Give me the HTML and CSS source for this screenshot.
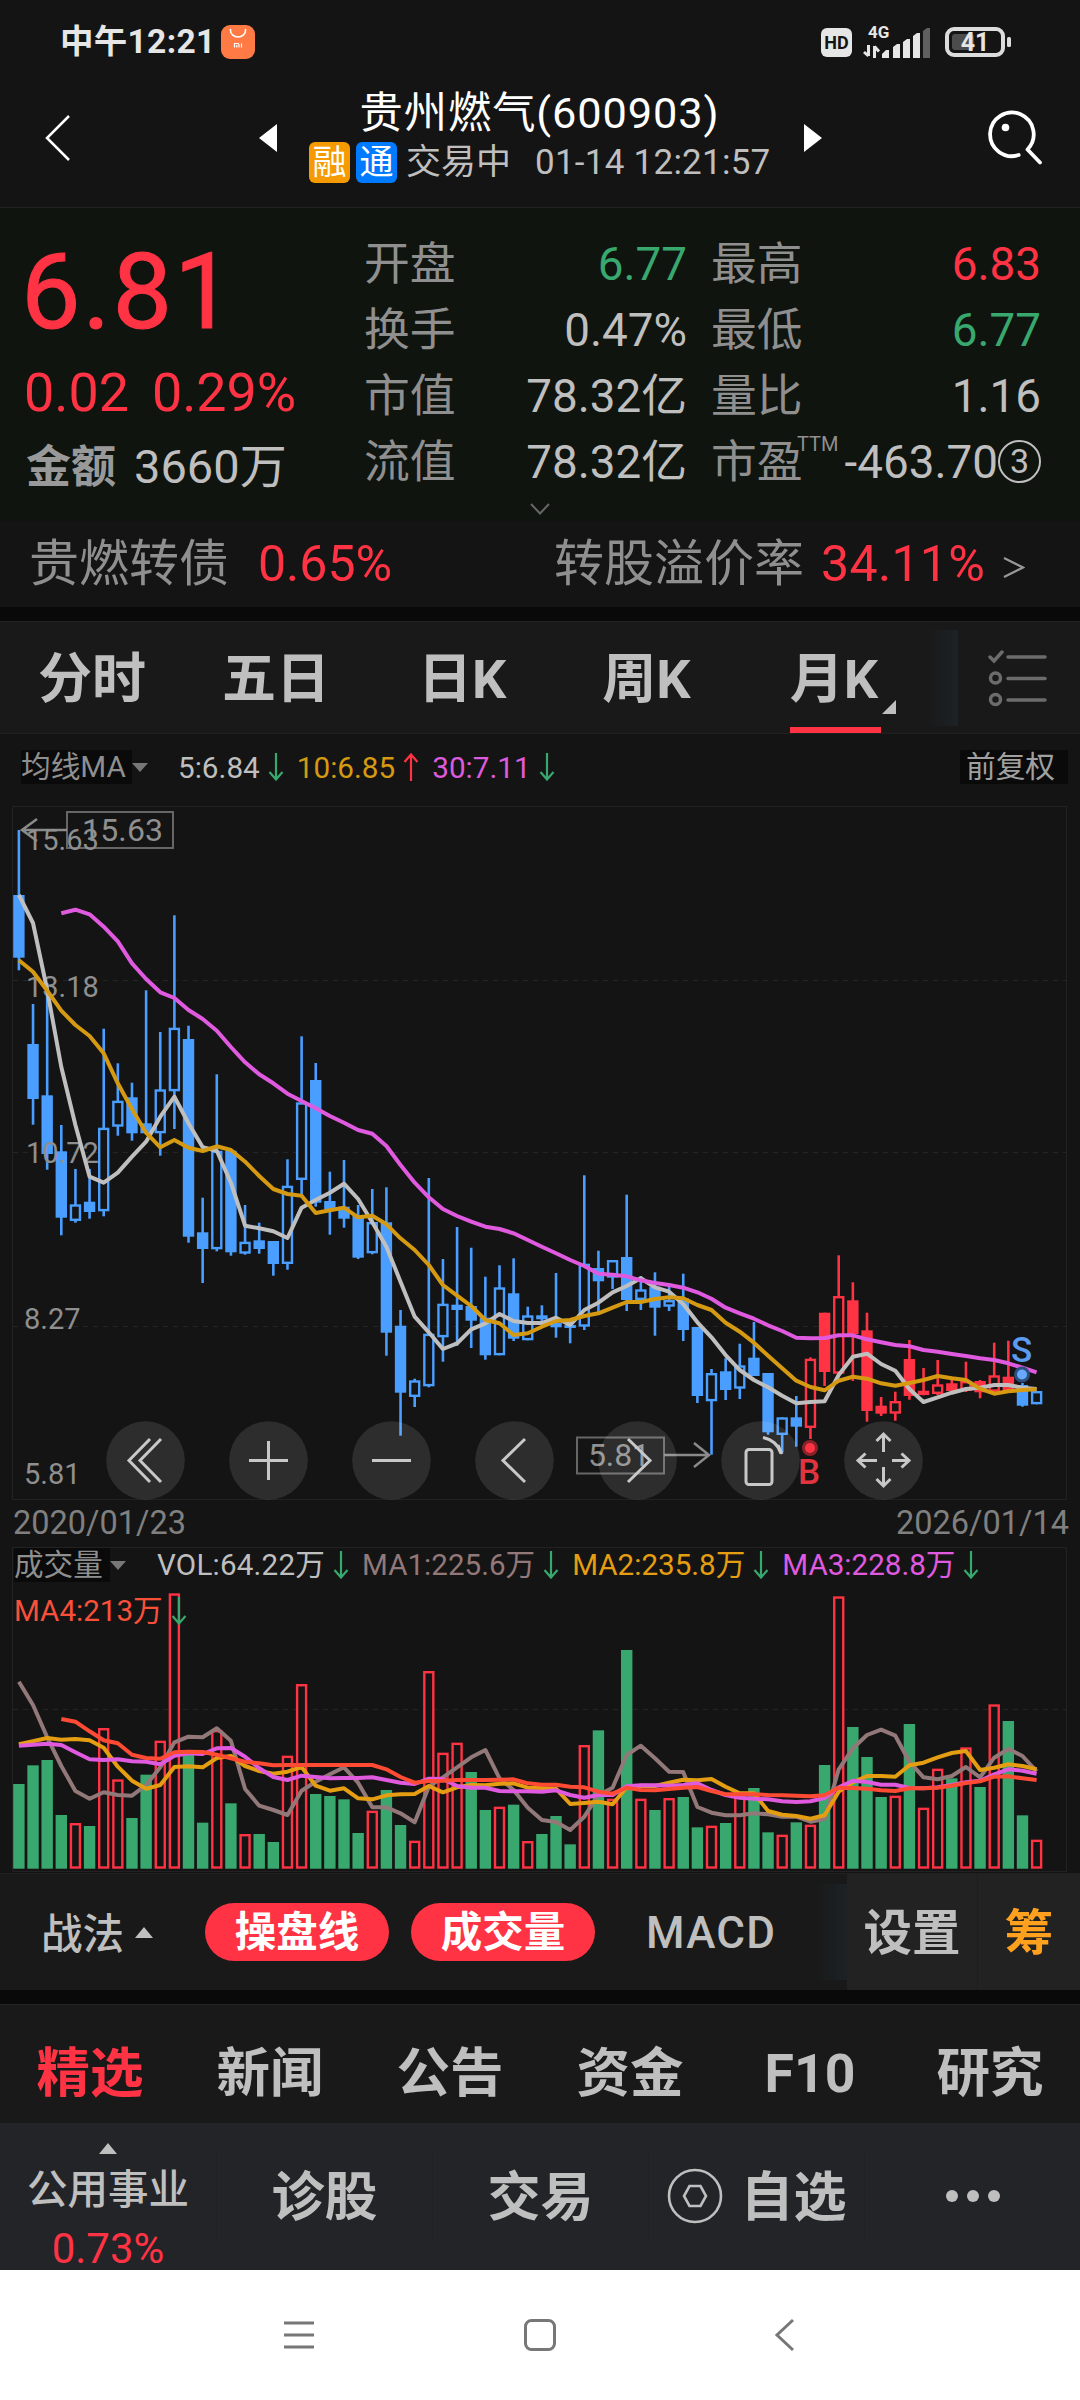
FILE: index.html
```html
<!DOCTYPE html>
<html lang="zh-CN">
<head>
    <meta charset="UTF-8">
    <meta name="viewport" content="width=device-width, initial-scale=1.0">
    <title>贵州燃气(600903)</title>
    <link rel="stylesheet" href="styles.css">
</head>
<body>

    <!-- 状态栏 -->
    <div class="status-bar">
        <span class="status-time">中午12:21</span>
        <svg class="mi-icon" width="34" height="34" viewBox="0 0 34 34">
            <rect width="34" height="34" rx="9" fill="#ff7a45"/>
            <path d="M9.500 4.500v1a7.500 6.500 0 0 0 15 0v-1" fill="none" stroke="#fff" stroke-width="1.600" stroke-linecap="round"/>
            <path d="M13.500 22.500v-4h3.200q1.300 0 1.300 1.500v2.500M15.800 20v2.500M20.500 18.500v4" fill="none" stroke="#fff" stroke-width="1.200"/>
        </svg>
        <span class="hd-badge">HD</span>
        <svg class="signal" width="70" height="36" viewBox="0 0 70 36">
            <text x="5" y="14" class="signal-text">4G</text>
            <path d="M5.500 21v11M1 28l4.500 4M11.500 34V22M11.500 22.500l4.500 5" fill="none" stroke="#e6e6e6" stroke-width="3"/>
            <g fill="#e6e6e6">
                <path d="M19 34v-4l4-4h3v8zM30 34V23l4-3h3v14zM40 34V18l4-3h3v19zM50 34V12l4-3h3v25z"/>
                <path d="M60 34V7l4-3h3v30z" fill="#606060"/>
            </g>
        </svg>
        <svg class="battery" width="68" height="32" viewBox="0 0 68 32">
            <rect x="3" y="3" width="56" height="26" rx="7" fill="none" stroke="#dcdcdc" stroke-width="4"/>
            <rect x="8" y="8" width="22" height="16" rx="3" fill="#4c4c4c"/>
            <rect x="63" y="11" width="4" height="10" rx="1.500" fill="#dcdcdc"/>
            <text x="31" y="24.500" class="battery-text">41</text>
        </svg>
    </div>

    <!-- 标题栏 -->
    <div class="header">
        <svg class="back" width="26" height="48" viewBox="0 0 26 48"><path d="M24 2L2 24l22 22" fill="none" stroke="#fff" stroke-width="2.500"/></svg>
        <svg class="prev" width="18" height="28" viewBox="0 0 18 28"><path d="M18 0v28L0 14z" fill="#fff"/></svg>
        <div class="title-box">
            <div class="title">贵州燃气(600903)</div>
            <div class="subtitle">
                <span class="badge badge-rong">融</span>
                <span class="badge badge-tong">通</span>
                <span class="state">交易中</span>
                <span class="time">01-14 12:21:57</span>
            </div>
        </div>
        <svg class="next" width="18" height="28" viewBox="0 0 18 28"><path d="M0 0l18 14L0 28z" fill="#fff"/></svg>
        <svg class="search" width="56" height="58" viewBox="0 0 56 58">
            <path d="M30.700 46A21.800 21.800 0 1 1 39.500 40.500L52 53.500" fill="none" stroke="#fff" stroke-width="3.800" stroke-linejoin="round" stroke-linecap="round"/>
            <circle cx="17.500" cy="18.500" r="3.800" fill="#fff"/>
        </svg>
    </div>

    <!-- 行情 -->
    <div class="quote">
        <div class="price-box">
            <div class="price">6.81</div>
            <div class="change"><span>0.02</span><span>0.29%</span></div>
            <div class="amount"><b>金额</b><span>3660万</span></div>
        </div>
        <div class="quote-grid">
            <span class="label">开盘</span><span class="value green">6.77</span>
            <span class="label">最高</span><span class="value red">6.83</span>
            <span class="label">换手</span><span class="value">0.47%</span>
            <span class="label">最低</span><span class="value green">6.77</span>
            <span class="label">市值</span><span class="value">78.32亿</span>
            <span class="label">量比</span><span class="value">1.16</span>
            <span class="label">流值</span><span class="value">78.32亿</span>
            <span class="label">市盈<sup class="ttm">TTM</sup></span><span class="value">-463.70<i class="circled">3</i></span>
        </div>
        <svg class="more" width="20" height="12" viewBox="0 0 20 12"><path d="M1 1l9 9.500L19 1" fill="none" stroke="#666" stroke-width="2"/></svg>
    </div>

    <!-- 转债 -->
    <div class="bond">
        <span>贵燃转债</span>
        <span class="red bond-rate">0.65%</span>
        <span class="bond-premium">转股溢价率</span>
        <span class="red bond-percent">34.11%</span>
        <svg width="22" height="24" viewBox="0 0 22 24"><path d="M1 2l19 9.500L1 21" fill="none" stroke="#999" stroke-width="2.200"/></svg>
    </div>

    <div class="gap"></div>

    <!-- 周期 -->
    <div class="period-tabs">
        <span>分时</span>
        <span>五日</span>
        <span>日K</span>
        <span>周K</span>
        <span class="active">月K</span>
        <div class="fade"></div>
        <svg class="list-icon" width="60" height="60" viewBox="0 0 60 60">
            <g fill="none" stroke="#6c6c6c" stroke-width="3.500" stroke-linecap="round">
                <path d="M2 9l4 4 8-9M20 9h37M20 30.500h37M20 52h37"/>
                <circle cx="7.500" cy="30" r="5"/>
                <circle cx="7.500" cy="51.500" r="5"/>
            </g>
        </svg>
    </div>

    <!-- 均线 -->
    <div class="ma-row">
        <span class="ma-label">均线MA</span>
        <i class="caret-down"></i>
        <span class="ma5">5:6.84</span><svg class="arrow down"><use href="#arrow"/></svg>
        <span class="ma10">10:6.85</span><svg class="arrow up"><use href="#arrow"/></svg>
        <span class="ma30">30:7.11</span><svg class="arrow down"><use href="#arrow"/></svg>
        <span class="fuquan">前复权</span>
    </div>

    <!-- K线图 -->
    <svg class="kline" width="1080" height="700" viewBox="0 800 1080 700">
        <defs>
            <symbol id="arrow" viewBox="0 0 16 28"><path d="M8 0v26M1.500 19L8 26.500l6.500-7.500" fill="none" stroke="currentColor" stroke-width="2.200"/></symbol>
        </defs>
        <path class="frame" d="M12.500 1499.500V806.500H1066.500V1499.500z"/>
        <path class="grid-line" d="M13 980.500H1066M13 1152.500H1066M13 1326.500H1066"/>
        <g id="candles"></g>
        <g class="tags">
            <rect x="67" y="812" width="106" height="36"/>
            <rect x="577" y="1437.500" width="87" height="36"/>
            <path d="M67 830H22M37 819L22 830l15 11M664 1455H709M694 1443l15 12-15 12"/>
            <text x="82" y="841" textLength="81">15.63</text>
            <text x="588" y="1466" textLength="62">5.81</text>
        </g>
        <g class="axis">
            <text x="26" y="850">15.63</text>
            <text x="26" y="997">13.18</text>
            <text x="26" y="1163">10.72</text>
            <text x="24" y="1329">8.27</text>
            <text x="24" y="1484">5.81</text>
        </g>
        <g id="price-lines"></g>
        <g class="marks">
            <circle cx="810" cy="1448" r="8" fill="#8c2229"/>
            <circle cx="810" cy="1448" r="5" fill="#ff3344"/>
            <text x="798" y="1484" fill="#e0343f">B</text>
            <circle cx="1022" cy="1374.500" r="8" fill="#2c4f7d"/>
            <circle cx="1022" cy="1374.500" r="5" fill="#6aa8ff"/>
            <text x="1011" y="1362" fill="#5c9cf0">S</text>
        </g>
        <g class="controls">
            <circle cx="145.500" cy="1460.500" r="39.300"/>
            <circle cx="268.500" cy="1460.500" r="39.300"/>
            <circle cx="391.500" cy="1460.500" r="39.300"/>
            <circle cx="514.500" cy="1460.500" r="39.300"/>
            <circle cx="637.500" cy="1460.500" r="39.300"/>
            <circle cx="760.500" cy="1460.500" r="39.300"/>
            <circle cx="883.500" cy="1460.500" r="39.300"/>
            <path d="M150 1439l-21 21.500 21 21.500M161 1439l-21 21.500 21 21.500"/>
            <path d="M249 1460.500h39M268.500 1441v39M372 1460.500h39"/>
            <path d="M525 1439l-22 21.500 22 21.500M628 1439l22 21.500-22 21.500"/>
            <rect x="746" y="1449.500" width="26" height="35" rx="3"/>
            <path d="M763 1437.500q14 3 18 16M778 1445l4 9"/>
            <path d="M883.500 1452v-17M876.500 1441l7-7 7 7M883.500 1467v18M876.500 1479l7 7 7-7M877 1460.500h-19M865.500 1453.500l-7.500 7 7.500 7M892 1460.500h17M901.500 1453.500l7.500 7-7.500 7"/>
        </g>
    </svg>
    <div class="dates"><span>2020/01/23</span><span>2026/01/14</span></div>

    <!-- 成交量 -->
    <div class="volume">
        <svg width="1080" height="326" viewBox="0 1547 1080 326">
            <path class="frame" d="M12.500 1547.500H1066.500V1871.500H12.500z"/>
            <path class="grid-line" d="M13 1709.500H1066"/>
            <g id="volume-bars"></g>
            <g id="volume-lines"></g>
        </svg>
        <div class="volume-legend">
            <span class="ma-label">成交量</span>
            <i class="caret-down"></i>
            <span class="vol">VOL:64.22万</span><svg class="arrow down"><use href="#arrow"/></svg>
            <span class="vma1">MA1:225.6万</span><svg class="arrow down"><use href="#arrow"/></svg>
            <span class="vma2">MA2:235.8万</span><svg class="arrow down"><use href="#arrow"/></svg>
            <span class="vma3">MA3:228.8万</span><svg class="arrow down"><use href="#arrow"/></svg>
            <span class="vma4">MA4:213万</span><svg class="arrow down"><use href="#arrow"/></svg>
        </div>
    </div>

    <!-- 指标 -->
    <div class="toolbar">
        <span class="zhanfa">战法</span>
        <i class="caret-up"></i>
        <span class="pill">操盘线</span>
        <span class="pill">成交量</span>
        <span class="macd">MACD</span>
        <div class="fade"></div>
        <span class="setting">设置</span>
        <span class="chip">筹</span>
    </div>

    <div class="gap"></div>

    <div class="news-tabs">
        <span class="active">精选</span>
        <span>新闻</span>
        <span>公告</span>
        <span>资金</span>
        <span>F10</span>
        <span>研究</span>
    </div>

    <!-- 底部操作栏 -->
    <div class="bottom-bar">
        <div class="industry">
            <i class="caret-up"></i>
            <span>公用事业</span>
            <span class="red industry-rate">0.73%</span>
        </div>
        <div class="action"><span>诊股</span></div>
        <div class="action"><span>交易</span></div>
        <div class="action">
            <svg width="56" height="56" viewBox="0 0 56 56" fill="none" stroke="#bfbfbf">
                <circle cx="28" cy="28" r="26" stroke-width="2.600"/>
                <path d="M22.500 18h11l5.500 10-5.500 10h-11L17 28z" stroke-width="2.600"/>
            </svg>
            <span>自选</span>
        </div>
        <div class="action">
            <svg width="56" height="14" viewBox="0 0 56 14" fill="#bfbfbf"><circle cx="7" cy="7" r="6"/><circle cx="28" cy="7" r="6"/><circle cx="49" cy="7" r="6"/></svg>
        </div>
    </div>

    <!-- 系统导航 -->
    <div class="nav">
        <svg width="32" height="32" viewBox="0 0 32 32"><path d="M1 4h30M1 16h30M1 28h30"/></svg>
        <svg width="34" height="34" viewBox="0 0 34 34"><rect x="1.500" y="2.500" width="29" height="29" rx="6"/></svg>
        <svg width="32" height="34" viewBox="0 0 32 34"><path d="M26 2L10 17l16 15"/></svg>
    </div>

    <script src="chart.js"></script>
</body>
</html>
```
FILE: styles.css
```css
/* 通用 */
* {
    box-sizing: border-box;
}
body {
    margin: 0;
    width: 1080px;
    height: 2400px;
    overflow: hidden;
    background: #141414;
    color: #bfbfbf;
    font-family: Roboto, 'Noto Sans CJK SC', sans-serif;
    display: flex;
    flex-direction: column;
}
svg {
    display: block;
    flex: none;
}
span {
    white-space: nowrap;
}
.red { color: #ff3344; }
.green { color: #38a86e; }
.gap {
    height: 14px;
    background: #090909;
}

/* 状态栏 */
.status-bar {
    height: 84px;
    display: flex;
    align-items: center;
    padding: 0 68px 0 60px;
    color: #e6e6e6;
}
.status-time {
    font-size: 33.500px;
    font-weight: 700;
    letter-spacing: .3px;
    line-height: 40px;
    width: 162px;
}
.hd-badge {
    margin-left: 566px;
    width: 31px;
    height: 29px;
    border-radius: 6px;
    background: #e6e6e6;
    color: #141414;
    font-size: 18px;
    font-weight: 700;
    line-height: 30px;
    text-align: center;
}
.signal {
    margin-left: 11px;
    overflow: visible;
}
.signal-text {
    font-size: 17px;
    font-weight: 700;
    fill: #e6e6e6;
}
.battery { margin-left: 11px; }
.battery-text {
    font-size: 25px;
    font-weight: 700;
    fill: #e6e6e6;
    text-anchor: middle;
}

/* 标题栏 */
.header {
    height: 124px;
    display: flex;
    align-items: center;
    border-bottom: 1px solid #1f2323;
    padding-bottom: 16px;
}
.back { margin-left: 45px; }
.prev { margin-left: 188px; }
.title-box {
    width: 527px;
    margin-top: -4px;
    text-align: center;
}
.title {
    color: #fff;
    font-size: 43.300px;
    line-height: 54px;
    letter-spacing: .9px;
    margin-left: -2px;
}
.subtitle {
    display: flex;
    align-items: center;
    padding-left: 32px;
    height: 43px;
    font-size: 35px;
    line-height: 43px;
}
.badge {
    width: 41px;
    height: 41px;
    border-radius: 6px;
    margin-right: 6px;
    color: #fff;
    font-size: 34px;
    line-height: 41px;
}
.badge-rong { background: #f59a00; }
.badge-tong { background: #007aff; }
.state { margin-left: 3px; }
.time {
    margin-left: 24px;
    letter-spacing: .25px;
}
.search { margin-left: 166px; }

/* 行情 */
.quote {
    height: 313px;
    background: #0f140f;
    display: flex;
    position: relative;
}
.price-box {
    width: 364px;
    padding-left: 24px;
}
.price {
    color: #ff3344;
    font-size: 106px;
    -webkit-text-stroke: 1px #ff3344;
    line-height: 110px;
    padding-top: 29px;
    height: 151px;
    margin-left: -3px;
    letter-spacing: 2px;
}
.change {
    display: flex;
    gap: 23px;
    color: #ff3344;
    font-size: 53.800px;
    line-height: 68px;
}
.amount {
    display: flex;
    gap: 18px;
    padding-left: 2px;
    font-size: 47px;
    line-height: 80px;
}
.amount b {
    font-size: 45px;
    line-height: 82px;
    color: #999;
}
.quote-grid {
    display: grid;
    grid-template-columns: 91px 232px 116px 238px;
    grid-auto-rows: 66px;
    padding-top: 24px;
    font-size: 45.800px;
    line-height: 66px;
}
.quote-grid .label { color: #8f8f8f; }
.quote-grid .label:nth-child(4n+3) { padding-left: 24px; }
.quote-grid .value { text-align: right; }
.ttm {
    position: absolute;
    left: 797px;
    top: 222px;
    font-size: 20px;
    line-height: 28px;
}
.circled {
    display: inline-block;
    width: 43px;
    height: 43px;
    border: 2px solid #bfbfbf;
    border-radius: 50%;
    font-size: 34px;
    font-style: normal;
    line-height: 38px;
    text-align: center;
    vertical-align: 5px;
}
.more {
    position: absolute;
    left: 530px;
    top: 295px;
}

/* 转债 */
.bond {
    height: 86px;
    display: flex;
    align-items: center;
    padding-left: 29px;
    font-size: 50px;
    line-height: 86px;
    color: #8f8f8f;
}
.bond span { height: 86px; }
.bond-rate { margin-left: 29px; }
.bond-premium { margin-left: 162px; }
.bond-percent {
    margin-left: 17px;
    letter-spacing: .3px;
}
.bond svg { margin: 7px 0 0 18px; }

/* 周期 */
.period-tabs {
    height: 113px;
    display: flex;
    align-items: center;
    background: #191919;
    border-top: 1px solid #222;
    border-bottom: 1px solid #202020;
    padding-left: 38px;
    font-size: 54px;
    font-weight: 700;
}
.period-tabs span {
    line-height: 116px;
    height: 111px;
    margin-right: 76px;
}
.period-tabs span:nth-child(2) { margin-right: 88px; }
.period-tabs span:nth-child(3) { margin-right: 96px; }
.period-tabs span:nth-child(4) { margin-right: 99px; }
.period-tabs .active {
    position: relative;
    width: 91px;
    margin-right: 46px;
    border-bottom: 6px solid #ff3344;
}
.period-tabs .active::after {
    content: '';
    position: absolute;
    right: -15px;
    top: 78px;
    border-left: 14px solid transparent;
    border-bottom: 14px solid #bfbfbf;
}
.fade {
    width: 30px;
    height: 96px;
    background: linear-gradient(to right, rgba(28, 34, 38, 0), #1c2226);
}
.period-tabs .fade { margin-left: auto; }
.list-icon { margin: 0 32px 0 30px; }

/* 均线 */
.ma-row {
    height: 66px;
    display: flex;
    align-items: center;
    padding: 0 12px 0 21px;
    font-size: 29.700px;
}
.ma-label {
    background: #0a0a0a;
    color: #8f8f8f;
    line-height: 34px;
}
.ma-row .ma-label { width: 111px; }
.caret-down {
    border: 8.500px solid transparent;
    border-top: 9px solid #777;
    border-bottom: 0;
}
.caret-up {
    border: 9.500px solid transparent;
    border-bottom: 11px solid #bfbfbf;
    border-top: 0;
}
.arrow {
    width: 16px;
    height: 28px;
}
.down { color: #38a86e; }
.up {
    color: #ff3344;
    transform: rotate(180deg);
}
.ma-row .arrow { margin: 0 13px 0 8px; }
.ma5 { margin-left: 30px; }
.ma10 { color: #d59a12; }
.ma30 { color: #dd5add; }
.fuquan {
    margin-left: auto;
    width: 108px;
    padding-left: 6px;
    background: #0a0a0a;
    line-height: 34px;
    color: #a0a0a0;
}

/* 图表 */
.frame {
    fill: none;
    stroke: #222;
}
.grid-line {
    stroke: #242424;
    stroke-dasharray: 5 5;
}
.axis {
    font-size: 29px;
    fill: #8f8f8f;
}
.tags {
    fill: none;
    stroke: #8a8a8a;
    stroke-width: 2.500;
}
.tags rect {
    stroke: #666;
    stroke-width: 2;
}
.tags text {
    font-size: 32px;
    fill: #8f8f8f;
    stroke: none;
}
.marks {
    font-size: 35px;
    font-weight: 500;
}
.controls {
    fill: none;
    stroke: #c8c8c8;
    stroke-width: 3;
}
.controls circle {
    fill: #fff;
    fill-opacity: .11;
    stroke: none;
}
.line {
    fill: none;
    stroke-width: 4;
    stroke-linejoin: round;
}
.dates {
    height: 47px;
    display: flex;
    justify-content: space-between;
    padding: 0 11px 0 13px;
    font-size: 32.500px;
    line-height: 47px;
    color: #808080;
}

/* 成交量 */
.volume {
    height: 326px;
    position: relative;
}
.volume-legend {
    position: absolute;
    left: 14px;
    top: 1px;
    width: 1050px;
    display: flex;
    flex-wrap: wrap;
    align-items: center;
    font-size: 29.600px;
    line-height: 34px;
    row-gap: 12px;
}
.volume-legend .ma-label { width: 96px; }
.volume-legend .arrow { margin: 0 13px 0 8px; }
.vol {
    margin-left: 31px;
    letter-spacing: .2px;
}
.vma1 { color: #927878; }
.vma2 { color: #e59e12; }
.vma3 { color: #e05ae0; }
.vma4 { color: #f9503a; }

/* 指标 */
.toolbar {
    height: 117px;
    display: flex;
    align-items: center;
    background: #191919;
    border-top: 1px solid #202020;
    padding-left: 41px;
    font-size: 41.500px;
    font-weight: 500;
}
.zhanfa { margin-top: -2px; }
.toolbar .caret-up { margin: 0 52px 0 11px; }
.pill {
    width: 184px;
    height: 58px;
    border-radius: 29px;
    margin-right: 22px;
    background: #ff3344;
    color: #fff;
    font-weight: 700;
    line-height: 60px;
    text-align: center;
}
.macd {
    margin: 2px 0 0 29px;
    font-size: 44px;
    letter-spacing: 1.300px;
}
.toolbar .fade { margin-left: auto; }
.setting, .chip {
    align-self: stretch;
    background: #222;
    line-height: 120px;
    text-align: center;
    font-size: 48.500px;
    font-weight: 700;
}
.setting {
    width: 131px;
    border-right: 1px solid #1d1d1d;
}
.chip {
    width: 102px;
    color: #ffa01e;
}

.news-tabs {
    height: 119px;
    display: grid;
    grid-template-columns: repeat(6, 180px);
    background: #191919;
    border-top: 1px solid #242424;
    font-size: 53.500px;
    font-weight: 700;
    line-height: 137px;
    text-align: center;
}
.news-tabs .active { color: #ff3344; }

/* 底部操作栏 */
.bottom-bar {
    height: 147px;
    display: grid;
    grid-template-columns: repeat(5, 216px);
    background: #232428;
}
.industry {
    display: flex;
    flex-direction: column;
    align-items: center;
    padding-top: 20px;
    font-size: 40.500px;
    font-weight: 500;
}
.industry span { line-height: 60px; }
.industry .caret-up { margin-bottom: 6px; }
.industry .industry-rate {
    font-size: 42px;
    font-weight: 400;
    line-height: 57px;
}
.action {
    display: flex;
    align-items: center;
    justify-content: center;
    gap: 18px;
    height: 88px;
    margin-top: 29px;
    border-left: 1px solid #1f2023;
    font-size: 53px;
    font-weight: 700;
    line-height: 84px;
}
.action span { margin-top: 4px; }

/* 系统导航 */
.nav {
    height: 130px;
    display: flex;
    justify-content: space-between;
    align-items: center;
    background: #fff;
    padding: 0 281px 0 283px;
}
.nav svg {
    fill: none;
    stroke: #777;
    stroke-width: 3;
}
```
FILE: chart.js
```javascript
const STEP = 14.135;
const LEFT = 18.9;
const BLUE = "#4a9eff";
const RED = "#ff3344";
const GREEN = "#38a86e";

// [最高, 实体上沿, 实体下沿, 最低, 是否空心]
const candles = [
    [830, 895, 957.7, 970.3, 0], [1004, 1044, 1099, 1124.7, 0], [983, 1095.3, 1154, 1169.7, 0], [1125, 1151.3, 1217.7, 1235.3, 0],
    [1169, 1204.3, 1221, 1222.7, 1], [1169, 1201.7, 1212, 1218.7, 0], [1028.7, 1127.7, 1211.3, 1216.3, 1], [1063.3, 1100.7, 1126.7, 1135.7, 1],
    [1082.7, 1097.3, 1133.3, 1140.7, 0], [990.3, 1123.3, 1133.3, 1134.3, 0], [1032, 1089.3, 1133.3, 1155.7, 1], [915.3, 1027.7, 1091.3, 1129, 1],
    [1025.7, 1039, 1236.7, 1242.7, 0], [1197.7, 1232.3, 1249, 1283, 0], [1074.3, 1150.7, 1249.3, 1251.3, 1], [1149.3, 1150.7, 1252.3, 1255.7, 0],
    [1205, 1241.7, 1253.7, 1254.7, 1], [1222.7, 1240.3, 1249, 1253.7, 0], [1241, 1241, 1264, 1275.7, 0], [1159.3, 1185.7, 1264, 1269.7, 1],
    [1036.3, 1102.3, 1180, 1195, 1], [1063, 1080, 1202.7, 1206.7, 0], [1171.7, 1201, 1209.3, 1234.7, 0], [1160, 1206.7, 1218.7, 1227.7, 0],
    [1205, 1215.5, 1257.7, 1259, 0], [1189, 1222, 1253.3, 1254.3, 1], [1187.3, 1222.3, 1332.7, 1355.7, 0], [1310, 1325.7, 1392.7, 1435.7, 0],
    [1378.7, 1380.3, 1397, 1407, 1], [1178, 1333.7, 1386.3, 1387.3, 1], [1259, 1303.7, 1337.3, 1361.7, 1], [1227, 1304.7, 1310, 1345.7, 0],
    [1247.7, 1306, 1320.7, 1348, 0], [1276.7, 1317.7, 1355.3, 1359.7, 0], [1265.3, 1287.3, 1355.3, 1355.3, 1], [1258.3, 1293.3, 1338.7, 1341, 0],
    [1306.7, 1315.3, 1340.3, 1340.3, 1], [1305.3, 1315.3, 1319.3, 1323, 0], [1273, 1323, 1327.3, 1337.7, 0], [1320, 1325, 1328, 1343.3, 0],
    [1175.3, 1263.7, 1326.7, 1330, 1], [1250.7, 1268, 1281.3, 1313.3, 0], [1260, 1260, 1277.7, 1289, 1], [1194.7, 1257, 1300, 1311, 0],
    [1276, 1289.3, 1300, 1310, 1], [1272.3, 1286.7, 1307.7, 1335.7, 0], [1283.3, 1300, 1306.7, 1311, 1], [1273.7, 1298.3, 1330, 1341, 0],
    [1327, 1327, 1396, 1403, 0], [1369, 1373, 1401.3, 1454.7, 1], [1358.3, 1371.3, 1390, 1400, 0], [1343.7, 1365.3, 1388.7, 1399, 1],
    [1322, 1357.7, 1376, 1376, 0], [1373, 1373, 1432.3, 1434.7, 0], [1417.3, 1417.3, 1435, 1452.3, 1], [1396, 1417.3, 1426.7, 1446.7, 0],
    [1357.3, 1358.7, 1428, 1439, 1], [1312.7, 1312.7, 1372, 1386, 0], [1255.3, 1296, 1373.7, 1374.7, 1], [1282.3, 1300.3, 1334, 1381, 0],
    [1312.7, 1330.3, 1411, 1421.7, 0], [1397, 1405.7, 1413.7, 1416, 0], [1391.7, 1401, 1413.7, 1420.7, 1], [1340, 1359, 1396, 1399.7, 0],
    [1368, 1390.7, 1395, 1395.3, 0], [1360, 1384.3, 1394, 1395, 1], [1376.7, 1383.3, 1391, 1391.7, 0], [1361.7, 1381, 1391, 1392, 1],
    [1380, 1381, 1392.3, 1398.3, 0], [1342.7, 1375.3, 1391.7, 1392, 1], [1340.7, 1376.7, 1391.7, 1392, 0], [1383, 1385, 1405.7, 1406.7, 0],
    [1391, 1391, 1404.3, 1404.3, 1]
];

const ma5 = [895, 923, 990, 1067, 1125, 1176.7, 1182.7, 1172.7, 1156.7, 1141.7, 1116.7, 1096.7, 1123.3, 1147.3, 1150.7, 1182.7, 1225.7, 1228.3, 1231.3, 1238, 1207.7, 1200, 1192.7, 1183.7, 1199, 1222.3, 1246.7, 1281.7, 1316.7, 1332.3, 1349, 1343.3, 1329.3, 1323.3, 1314, 1321, 1323, 1323, 1317.7, 1325, 1310, 1302.7, 1292.3, 1286, 1278.3, 1287.3, 1291.7, 1304, 1322.3, 1337.3, 1355, 1370, 1380, 1387.3, 1395.7, 1403.3, 1402, 1401.3, 1375, 1356.7, 1353.7, 1364, 1370.7, 1389, 1402, 1397.3, 1392.7, 1389, 1387.7, 1385, 1385, 1387.7, 1389];
const ma10 = [960.3, 971.7, 990.7, 1010.7, 1025, 1036, 1053.3, 1083.3, 1109.3, 1132.7, 1147.3, 1140, 1147.7, 1151, 1146.3, 1150, 1161.7, 1176, 1189, 1194, 1195.7, 1213, 1210.3, 1207.7, 1217.3, 1215.7, 1224.3, 1238.3, 1250, 1265, 1285, 1295.7, 1306, 1320, 1323.3, 1335, 1333.3, 1326.7, 1321, 1320, 1316, 1313.3, 1307.7, 1302, 1302, 1299, 1297.3, 1298.3, 1305, 1310, 1322.7, 1331.7, 1342.7, 1355.7, 1368.3, 1380.7, 1387, 1390.3, 1380.7, 1376.7, 1378.7, 1383.3, 1385.7, 1383, 1380, 1376, 1378.3, 1380, 1388.7, 1393.7, 1391.3, 1390, 1389.3];
const ma30 = [913.3, 909.7, 914.3, 926.7, 941.3, 963.3, 979, 992.3, 998, 1010, 1019, 1030.7, 1047, 1062.3, 1074.3, 1083.3, 1093.7, 1101, 1108.3, 1116, 1122.7, 1130, 1133.7, 1146, 1165, 1182.7, 1197.3, 1209, 1216, 1221.7, 1226.7, 1229, 1233.3, 1240, 1246.7, 1253.3, 1260, 1266, 1273.7, 1274.7, 1276.3, 1280.3, 1283, 1285, 1287.7, 1292.3, 1298.7, 1307.7, 1313.3, 1318.7, 1325.3, 1331, 1337.7, 1338.3, 1338, 1335.3, 1335.3, 1339.3, 1342.3, 1345, 1346.3, 1350, 1351.7, 1354, 1356, 1358.3, 1360, 1363.3, 1367.7, 1372.3];

// 成交量：负数为红色空心柱
const volumes = [762, 706, 690, 855, -879, 888, -594, -748, 864, 734, -632, -190, 672, 878, -600, 820, -912, 912, 936, -677, -462, 792, 798, 808, 909, -842, 780, 885, -932, -423, -668, -638, 726, 840, -830, 824, -933, 912, 858, 943, -645, 601, -806, 360, -806, 840, -804, 801, 892, -887, 879, -790, 774, 907, -914, 877, -884, 705, -199, 591, 681, 801, -797, 582, -833, -716, 745, -652, 771, -523, 573, 856, -929];
const vma1 = [455, 525, 622, 708, 783, 806, 787, 795, 797, 765, 712, 637, 620, 622, 595, 632, 777, 827, 840, 855, 782, 755, 733, 712, 758, 832, 832, 850, 877, 770, 742, 712, 682, 660, 745, 780, 833, 870, 876, 900, 860, 795, 773, 675, 647, 685, 725, 726, 831, 848, 856, 856, 850, 853, 860, 860, 875, 867, 718, 655, 615, 599, 617, 695, 742, 748, 738, 711, 742, 683, 657, 678, 724];
const vma2 = [643, 634, 624, 629, 627, 631, 653, 710, 752, 776, 765, 711, 709, 712, 684, 678, 708, 723, 731, 725, 711, 767, 782, 775, 805, 808, 796, 793, 792, 768, 787, 772, 765, 766, 761, 760, 773, 774, 776, 822, 819, 815, 823, 772, 767, 768, 758, 749, 751, 747, 770, 790, 790, 843, 854, 858, 866, 856, 785, 757, 738, 738, 740, 706, 698, 682, 669, 663, 720, 713, 703, 708, 718];
const vma3 = [647, 644, 641, 645, 667, 688, 690, 688, 694, 695, 703, 677, 670, 672, 655, 654, 680, 715, 741, 750, 737, 741, 745, 744, 744, 742, 750, 758, 762, 746, 747, 768, 773, 773, 783, 784, 784, 785, 781, 795, 803, 795, 795, 769, 766, 766, 767, 765, 760, 780, 795, 803, 806, 808, 814, 816, 814, 804, 772, 752, 756, 764, 764, 774, 775, 772, 765, 757, 752, 733, 718, 722, 731];
const vma4 = [567, 575, 604, 631, 640, 674, 684, 686, 667, 665, 666, 674, 685, 695, 700, 706, 705, 705, 705, 705, 705, 705, 705, 718, 741, 758, 753, 752, 750, 750, 750, 749, 748, 760, 764, 764, 770, 772, 785, 791, 773, 780, 781, 777, 773, 771, 783, 793, 793, 793, 795, 796, 797, 799, 796, 773, 774, 776, 781, 783, 775, 775, 773, 767, 759, 754, 740, 739, 745, 750];

const xAt = i => LEFT + STEP * i;
const volumeY = v => 1530 + v / 3;

function bar(x, top, bottom, color, hollow) {
    if (hollow) {
        return `<rect x="${x - 4.5}" y="${top + 1.2}" width="9" height="${Math.max(bottom - top - 2.4, 1)}" fill="#141414" stroke="${color}" stroke-width="2.400"/>`;
    }
    return `<rect x="${x - 5.7}" y="${top}" width="11.400" height="${bottom - top}" fill="${color}"/>`;
}

function line(values, color, offset = 0) {
    const points = values.map((y, i) => `${xAt(i + offset).toFixed(1)},${y.toFixed(1)}`).join(" ");
    return `<polyline class="line" points="${points}" stroke="${color}"/>`;
}

document.getElementById("candles").innerHTML = candles.map(([high, top, bottom, low, hollow], i) => {
    const x = xAt(i);
    const color = i >= 56 && i <= 70 ? RED : BLUE;
    return `<path d="M${x} ${high}V${low}" stroke="${color}" stroke-width="2.600"/>` + bar(x, top, bottom, color, hollow);
}).join("");

document.getElementById("price-lines").innerHTML =
    line(ma5, "#bfbfbf") + line(ma10, "#d59a12") + line(ma30, "#e05ae0", 3);

document.getElementById("volume-bars").innerHTML = volumes.map((v, i) =>
    bar(xAt(i), volumeY(Math.abs(v)), 1868.7, v < 0 ? RED : GREEN, v < 0)
).join("");

document.getElementById("volume-lines").innerHTML =
    line(vma1.map(volumeY), "#927878") + line(vma2.map(volumeY), "#e59e12") +
    line(vma3.map(volumeY), "#e05ae0") + line(vma4.map(volumeY), "#ff4b33", 3);
```
